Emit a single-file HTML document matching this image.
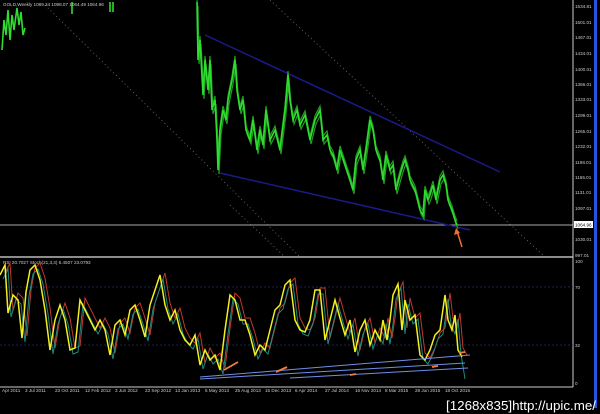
<!DOCTYPE html>
<html><head><meta charset="utf-8"><style>
html,body{margin:0;padding:0;background:#000;width:600px;height:414px;overflow:hidden}
svg{display:block}
text{font-family:"Liberation Sans",sans-serif}
</style></head><body>
<svg width="600" height="414" viewBox="0 0 600 414" xmlns="http://www.w3.org/2000/svg">
<defs>
<polyline id="px" points="197,2 198,60 200,40 203,95 205,60 208,90 210,60 212,110 215,100 217,140 218,170 220,130 223,110 226,120 228,100 232,80 235,60 237,90 240,110 243,100 246,130 250,140 253,120 257,150 260,130 263,145 266,110 270,140 275,130 280,150 285,110 288,75 290,100 293,120 297,110 300,125 305,115 310,140 315,120 320,110 323,140 327,135 330,150 333,155 337,170 340,150 345,165 350,180 353,190 356,160 360,150 363,170 366,150 370,120 373,130 376,150 380,160 383,180 386,155 390,170 393,165 396,190 400,175 403,165 405,160 408,170 410,180 415,190 420,210 423,215 425,190 428,200 430,195 433,185 436,200 440,180 443,175 446,185 448,200 452,210 455,220 457,225"/>
</defs>
<rect width="600" height="414" fill="#000"/>
<g stroke="#777" stroke-width="0.8" stroke-dasharray="1,3" fill="none">
<line x1="45" y1="5" x2="300" y2="257"/>
<line x1="270" y1="0" x2="545" y2="257"/>
<line x1="230" y1="205" x2="285" y2="257"/>
</g>
<line x1="0" y1="225" x2="573" y2="225" stroke="#aaa" stroke-width="1"/>
<line x1="205" y1="35" x2="500" y2="172" stroke="#1a1a8a" stroke-width="1.5"/>
<line x1="220" y1="173" x2="470" y2="230" stroke="#1a1a8a" stroke-width="1.5"/>
<g stroke="#2fdc2f" fill="none">
<polyline stroke-width="1.6" points="2,50 4,20 6,35 8,10 10,40 12,15 14,30 17,8 19,25 21,12 23,35 25,28"/>
<line x1="72" y1="2" x2="72" y2="14" stroke-width="1.6"/>
<line x1="110" y1="2" x2="110" y2="12" stroke-width="1.6"/><line x1="113" y1="2" x2="113" y2="12" stroke-width="1.6"/>
<use href="#px" stroke="#1fa01f" stroke-width="1.2" transform="translate(0,-4)"/>
<use href="#px" stroke="#1fa01f" stroke-width="1.2" transform="translate(1,4)"/>
<use href="#px" stroke-width="1.6"/>
</g>
<line x1="462" y1="247" x2="457" y2="231" stroke="#f07030" stroke-width="1.5"/>
<polygon points="456,228 454,235 460,233" fill="#f07030"/>
<line x1="0" y1="257" x2="573" y2="257" stroke="#bbb" stroke-width="1.5"/>
<line x1="573" y1="0" x2="573" y2="387" stroke="#ccc" stroke-width="1"/>
<line x1="0" y1="387" x2="573" y2="387" stroke="#ccc" stroke-width="1"/>
<rect x="594" y="0" width="3" height="408" fill="#2a52e0"/>
<g fill="#ccc" font-size="4.6">
<text x="575" y="8">1534.81</text><text x="575" y="24">1501.01</text><text x="575" y="39">1467.01</text><text x="575" y="55">1434.01</text><text x="575" y="71">1400.01</text><text x="575" y="86">1366.01</text><text x="575" y="101">1333.01</text><text x="575" y="117">1299.01</text><text x="575" y="133">1265.01</text><text x="575" y="148">1232.01</text><text x="575" y="164">1198.01</text><text x="575" y="179">1165.01</text><text x="575" y="194">1131.01</text><text x="575" y="210">1097.01</text><text x="575" y="241">1030.01</text><text x="575" y="257">997.01</text>
<text x="575" y="263">100</text><text x="575" y="289">70</text><text x="575" y="347">32</text><text x="575" y="385">0</text>
</g>
<rect x="574" y="221" width="19" height="7" fill="#fff"/>
<text x="575" y="226.5" font-size="4.6" fill="#000">1064.96</text>
<text x="3" y="6" font-size="4.6" fill="#ccc">GOLD,Weekly  1089.34 1098.07 1064.49 1064.96</text>
<text x="3" y="264" font-size="4.6" fill="#ccc">RSI 20.7027  Stoch(21,3,3) 6.4507 23.0793</text>
<g stroke="#223366" stroke-width="0.8" stroke-dasharray="2,2">
<line x1="0" y1="287" x2="573" y2="287"/><line x1="0" y1="345" x2="573" y2="345"/>
</g>
<g fill="none" stroke-width="1">
<polyline stroke="#c0392b" transform="translate(5,-2)" points="0,275 5,265 8,313 13,295 18,300 22,338 26,292 30,270 35,265 40,280 45,310 50,350 55,320 60,305 65,320 70,350 75,348 80,300 85,310 90,320 95,330 100,320 105,330 110,355 115,325 120,320 125,335 130,310 135,305 140,320 145,337 150,305 155,290 160,275 165,305 170,320 175,310 180,330 185,340 190,345 195,335 200,365 205,350 210,360 215,355 220,370 225,330 230,295 235,300 240,320 245,320 250,335 255,355 260,345 265,350 270,330 275,310 280,305 285,285 290,280 295,320 300,330 305,332 310,320 315,290 320,290 325,340 330,320 335,300 340,318 345,335 350,320 355,352 360,330 365,320 370,345 375,330 380,340 383,320 387,340 390,320 393,295 398,284 402,330 405,300 410,320 415,315 420,355 425,360 430,350 435,335 440,330 445,295 448,320 452,330 455,315 458,350 462,357"/>
<polyline stroke="#1f8a80" transform="translate(3,4)" points="0,275 5,265 8,313 13,295 18,300 22,338 26,292 30,270 35,265 40,280 45,310 50,350 55,320 60,305 65,320 70,350 75,348 80,300 85,310 90,320 95,330 100,320 105,330 110,355 115,325 120,320 125,335 130,310 135,305 140,320 145,337 150,305 155,290 160,275 165,305 170,320 175,310 180,330 185,340 190,345 195,335 200,365 205,350 210,360 215,355 220,370 225,330 230,295 235,300 240,320 245,320 250,335 255,355 260,345 265,350 270,330 275,310 280,305 285,285 290,280 295,320 300,330 305,332 310,320 315,290 320,290 325,340 330,320 335,300 340,318 345,335 350,320 355,352 360,330 365,320 370,345 375,330 380,340 383,320 387,340 390,320 393,295 398,284 402,330 405,300 410,320 415,315 420,355 425,360 430,350 435,335 440,330 445,295 448,320 452,330 455,315 458,350 462,375"/>
<polyline stroke="#f2f020" stroke-width="1.5" points="0,275 5,265 8,313 13,295 18,300 22,338 26,292 30,270 35,265 40,280 45,310 50,350 55,320 60,305 65,320 70,350 75,348 80,300 85,310 90,320 95,330 100,320 105,330 110,355 115,325 120,320 125,335 130,310 135,305 140,320 145,337 150,305 155,290 160,275 165,305 170,320 175,310 180,330 185,340 190,345 195,335 200,365 205,350 210,360 215,355 220,370 225,330 230,295 235,300 240,320 245,320 250,335 255,355 260,345 265,350 270,330 275,310 280,305 285,285 290,280 295,320 300,330 305,332 310,320 315,290 320,290 325,340 330,320 335,300 340,318 345,335 350,320 355,352 360,330 365,320 370,345 375,330 380,340 383,320 387,340 390,320 393,295 398,284 402,330 405,300 410,320 415,315 420,355 425,360 430,350 435,335 440,330 445,295 448,320 452,330 455,315 458,350 462,357"/>
</g>
<g stroke="#6f8fe8" stroke-width="1">
<line x1="200" y1="377" x2="470" y2="355"/>
<line x1="200" y1="379" x2="465" y2="363"/>
<line x1="290" y1="378" x2="468" y2="368"/>
</g>
<g stroke="#f08040" stroke-width="1.8">
<line x1="224" y1="370" x2="238" y2="362"/><line x1="276" y1="372" x2="287" y2="367"/>
<line x1="350" y1="375" x2="356" y2="374"/><line x1="432" y1="367" x2="438" y2="366"/>
<line x1="459" y1="353" x2="465" y2="352"/>
</g>
<g fill="#ccc" font-size="4.6">
<text x="2" y="392">Apr 2011</text><text x="25" y="392">3 Jul 2011</text><text x="55" y="392">23 Oct 2011</text><text x="85" y="392">12 Feb 2012</text><text x="115" y="392">3 Jun 2012</text><text x="145" y="392">23 Sep 2012</text><text x="175" y="392">13 Jan 2013</text><text x="205" y="392">5 May 2013</text><text x="235" y="392">25 Aug 2013</text><text x="265" y="392">15 Dec 2013</text><text x="295" y="392">6 Apr 2014</text><text x="325" y="392">27 Jul 2014</text><text x="355" y="392">16 Nov 2014</text><text x="385" y="392">8 Mar 2015</text><text x="415" y="392">28 Jun 2015</text><text x="445" y="392">18 Oct 2015</text>
</g>
<text x="446" y="410" font-size="13" fill="#fff" font-family="Liberation Mono, monospace" textLength="150" lengthAdjust="spacingAndGlyphs">[1268x835]http://upic.me/</text>
</svg>
</body></html>
